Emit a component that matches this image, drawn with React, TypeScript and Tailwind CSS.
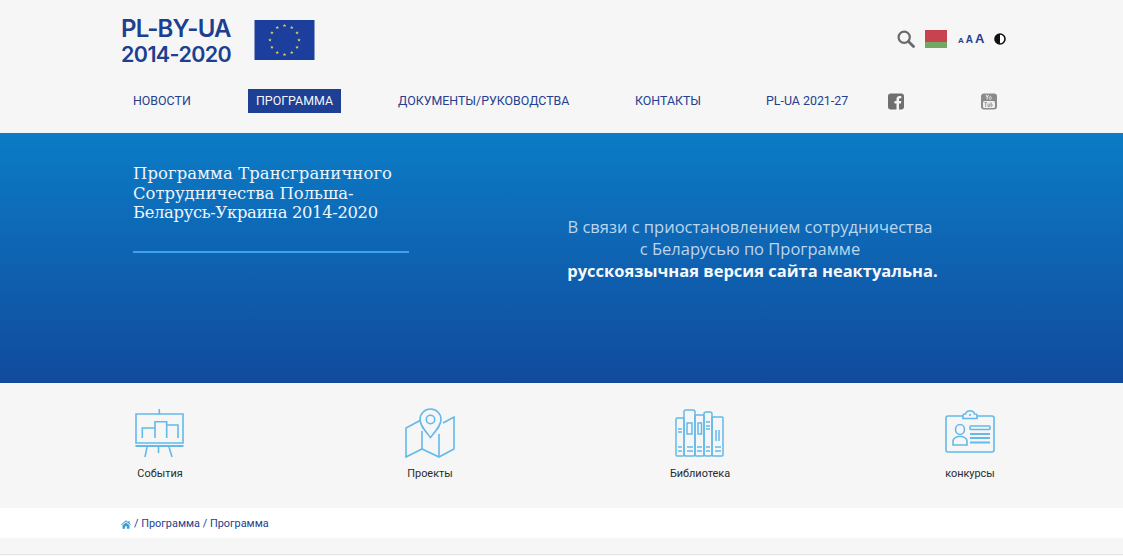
import React from "react";

const stars = Array.from({ length: 12 }, (_, i) => {
  const a = (i * Math.PI) / 6;
  return { x: 30 + 14.5 * Math.sin(a), y: 20 - 14.5 * Math.cos(a) };
});

function EuFlag() {
  return (
    <svg width="61" height="40" viewBox="0 0 60 40" className="block">
      <rect width="60" height="40" fill="#1c3f9e" />
      {stars.map((s, i) => (
        <polygon
          key={i}
          fill="#e8d44a"
          transform={`translate(${s.x} ${s.y})`}
          points="0,-1.8 0.5,-0.55 1.75,-0.55 0.8,0.2 1.1,1.45 0,0.7 -1.1,1.45 -0.8,0.2 -1.75,-0.55 -0.5,-0.55"
        />
      ))}
    </svg>
  );
}

const S = "#63b9ea";

function BoardIcon() {
  return (
    <svg width="50" height="50" viewBox="0 0 50 50" fill="none" stroke={S} strokeWidth="1.6">
      <path d="M24.3 1V6M1 6H48V35H1V6Z" />
      <path d="M0.5 38H48.5" strokeWidth="1.8" />
      <path d="M7.3 30V20H20V30M20 20V13.7H31.7V30M31.7 17H43V30" />
      <path d="M12 39L10 49M23.5 39V45M34 39L37 49" />
    </svg>
  );
}

function MapIcon() {
  return (
    <svg width="50" height="50" viewBox="0 0 50 50" fill="none" stroke={S} strokeWidth="1.6">
      <path d="M16 12L1 20V49L17 41L34 49L49 41V9L38 15" />
      <path d="M17 23V41M34 26V49" />
      <path d="M25.5 29.5C20 22.5 15 17.5 15 11.5C15 5.5 19.8 1 25.5 1C31.2 1 36 5.5 36 11.5C36 17.5 31 22.5 25.5 29.5Z" />
      <circle cx="25.5" cy="11.5" r="4.2" />
    </svg>
  );
}

function BooksIcon() {
  return (
    <svg width="50" height="50" viewBox="0 0 50 50" fill="none" stroke={S} strokeWidth="1.5">
      <rect x="1" y="10" width="8" height="38" rx="1" />
      <rect x="9" y="2" width="11" height="46" rx="2" />
      <rect x="20" y="7" width="9" height="41" rx="1" />
      <rect x="29" y="4" width="8" height="44" rx="2" />
      <rect x="37" y="9" width="11" height="39" rx="1" />
      <rect x="12" y="15" width="5" height="11" />
      <rect x="23" y="15" width="3.5" height="11" />
      <path d="M3 21H7M3 24H7M31 14H35M31 18H35M31 21H35M41 22V33M44 22V33M3 39H7M3 43H7M12 39H18M12 43H18M22 39H27M22 43H27M31 39H35M31 43H35M40 39H46M40 43H46" />
    </svg>
  );
}

function BadgeIcon() {
  return (
    <svg width="50" height="50" viewBox="0 0 50 50" fill="none" stroke={S} strokeWidth="1.6">
      <path d="M18 8H3C1.8 8 1 8.8 1 10V42C1 43.2 1.8 44 3 44H47C48.2 44 49 43.2 49 42V10C49 8.8 48.2 8 47 8H32" />
      <path d="M18 10.5H32V7.5C32 6.5 31 6 30 6H29.5C29 4 27.5 2.8 25 2.8C22.5 2.8 21 4 20.5 6H20C19 6 18 6.5 18 7.5V10.5Z" />
      <path d="M25 6V8" />
      <ellipse cx="15" cy="21.5" rx="4.5" ry="5" />
      <path d="M8 37V33.5C8 30 11 29 13 28.5H17C19 29 22 30 22 33.5V37H8Z" />
      <rect x="25" y="18" width="20" height="3.5" rx="1" />
      <path d="M25 26H45M25 30H45M25 34.5H45" strokeWidth="1.8" />
    </svg>
  );
}

function Search() {
  return (
    <svg width="18" height="18" viewBox="0 0 18 18" fill="none" stroke="#6a6a6a">
      <circle cx="7.2" cy="7.2" r="5.6" strokeWidth="2.2" />
      <path d="M11.5 11.5L16.5 16.5" strokeWidth="2.8" strokeLinecap="round" />
    </svg>
  );
}

function Contrast() {
  return (
    <svg width="12" height="12" viewBox="0 0 12 12" className="block">
      <circle cx="6" cy="6" r="5" fill="#fff" stroke="#111" strokeWidth="1.6" />
      <path d="M6 1A5 5 0 0 0 6 11Z" fill="#111" />
    </svg>
  );
}

function Facebook() {
  return (
    <svg width="16" height="17" viewBox="0 0 16 17" className="block">
      <path
        fill="#6f6f6f"
        d="M2.5 0.5H13.5C14.9 0.5 16 1.6 16 3V14C16 15.4 14.9 16.5 13.5 16.5H11V10.4H13L13.3 8H11V6.5C11 5.8 11.2 5.3 12.2 5.3H13.4V3.2C13.2 3.2 12.5 3.1 11.6 3.1C9.8 3.1 8.5 4.2 8.5 6.2V8H6.5V10.4H8.5V16.5H2.5C1.1 16.5 0 15.4 0 14V3C0 1.6 1.1 0.5 2.5 0.5Z"
      />
    </svg>
  );
}

function Youtube() {
  return (
    <svg width="16" height="17" viewBox="0 0 16 17" className="block">
      <rect x="0" y="0.5" width="16" height="16" rx="3" fill="#8a8a8a" />
      <rect x="2" y="8" width="12" height="7" rx="1.5" fill="#f0f0f0" />
      <path d="M5 1.8L6.2 4.2V6.4M7.6 1.8L6.2 4.2" stroke="#f0f0f0" strokeWidth="1" fill="none" />
      <rect x="8.4" y="3.6" width="1.8" height="2.8" rx="0.7" stroke="#f0f0f0" strokeWidth="0.8" fill="none" />
      <path d="M3.4 9.5H6M4.7 9.5V14M7 10.5V13.5H8.6V10.5M10 9.3V13.5C11.8 13.8 11.8 10.8 10 11" stroke="#8a8a8a" strokeWidth="0.8" fill="none" />
    </svg>
  );
}

function Home() {
  return (
    <svg width="10" height="9" viewBox="0 0 10 9" className="block">
      <path fill="#3d9fd8" d="M5 0.3L7.4 2.3V1H8.6V3.3L10 4.5L9.4 5.1L5 1.5L0.6 5.1L0 4.5ZM1.5 5.2L5 2.4L8.5 5.2V8.8H5.9V6.2H4.1V8.8H1.5Z" />
    </svg>
  );
}

function Feature({ icon, label, className }: { icon: React.ReactNode; label: string; className: string }) {
  return (
    <div className={`flex flex-col items-center ${className}`}>
      {icon}
      <span className="mt-[8px] text-[10.9px] leading-[16px] whitespace-nowrap text-[#2a2a2a] font-['Roboto',sans-serif]">{label}</span>
    </div>
  );
}

const navLink = "text-[12.4px] leading-[24px] whitespace-nowrap font-['Roboto',sans-serif]";

export default function App() {
  return (
    <div className="h-[556px] w-[1123px] overflow-hidden bg-[#f6f6f6] font-['Roboto',sans-serif]">
      <header className="h-[133px] pl-[121px] pt-[15px]">
        <div className="flex h-[50px] items-center">
          <div className="font-['Inter',sans-serif] font-semibold text-[#1d3f8f] w-[133px]">
            <div className="text-[24px] leading-[27px] tracking-[-0.8px]">PL-BY-UA</div>
            <div className="text-[21.5px] leading-[24px] tracking-[-0.6px]">2014-2020</div>
          </div>
          <EuFlag />
          <div className="ml-[582px] flex items-center -translate-y-px">
            <Search />
            <div className="ml-[10px] flex h-[18px] w-[22px] flex-col">
              <div className="h-[12px] bg-[#c8434d]" />
              <div className="h-[6px] bg-[#72a862]" />
            </div>
            <div className="ml-[11px] flex items-baseline gap-[2px] font-['Liberation_Sans',sans-serif] font-bold text-[#25408f]">
              <span className="text-[8px]">A</span>
              <span className="text-[10px]">A</span>
              <span className="text-[13px]">A</span>
            </div>
            <div className="ml-[10px]">
              <Contrast />
            </div>
          </div>
        </div>
        <nav className="mt-[24px] flex items-center pl-[12px]">
          <span className={`${navLink} w-[57px] text-[#25408f]`}>НОВОСТИ</span>
          <span className={`${navLink} ml-[58px] w-[93px] bg-[#1d3f94] text-center text-[#f2f5fb]`}>ПРОГРАММА</span>
          <span className={`${navLink} ml-[57px] w-[172px] text-[#25408f]`}>ДОКУМЕНТЫ/РУКОВОДСТВА</span>
          <span className={`${navLink} ml-[65px] w-[66px] text-[#25408f]`}>КОНТАКТЫ</span>
          <span className={`${navLink} ml-[65px] w-[83px] text-[#25408f]`}>PL-UA 2021-27</span>
          <span className="ml-[39px]">
            <Facebook />
          </span>
          <span className="ml-[77px]">
            <Youtube />
          </span>
        </nav>
      </header>

      <section className="flex h-[250px] bg-gradient-to-b from-[#0b7cc6] to-[#114a9d] pl-[133px] text-white">
        <div className="w-[276px] pt-[31px]">
          <h1 className="font-['DejaVu_Serif',serif] text-[16.4px] leading-[19.5px] text-[#eef5fb] font-normal whitespace-nowrap">
            <span className="tracking-[0.12px]">Программа Трансграничного</span>
            <br />
            Сотрудничества Польша-
            <br />
            <span className="tracking-[-0.35px]">Беларусь-Украина 2014-2020</span>
          </h1>
          <div className="mt-[28px] h-[2px] bg-[#3aa3ea]" />
        </div>
        <div className="ml-[124px] w-[434px] pt-[83px] text-center font-['Open_Sans',sans-serif] text-[16.5px] leading-[22px] text-[#bcd6ee]">
          <p>В связи с приостановлением сотрудничества</p>
          <p>с Беларусью по Программе</p>
          <p className="pl-[5px] font-bold text-[#f6f9fc] whitespace-nowrap">русскоязычная версия сайта неактуальна.</p>
        </div>
      </section>

      <section className="flex h-[125px] pl-[135px] pt-[25px]">
        <Feature icon={<BoardIcon />} label="События" className="w-[50px]" />
        <Feature icon={<MapIcon />} label="Проекты" className="ml-[220px] w-[50px]" />
        <Feature icon={<BooksIcon />} label="Библиотека" className="ml-[220px] w-[50px]" />
        <Feature icon={<BadgeIcon />} label="конкурсы" className="ml-[220px] w-[50px]" />
      </section>

      <div className="flex h-[30px] items-center gap-[3px] bg-white pl-[121px] pt-[2px] text-[10.9px] text-[#25408f]">
        <Home />
        <span className="whitespace-pre">/ Программа / Программа</span>
      </div>
      <div className="mt-[16px] h-px bg-[#e6e6e6]" />
    </div>
  );
}
